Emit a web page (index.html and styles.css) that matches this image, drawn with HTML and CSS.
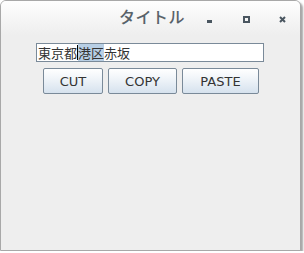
FILE: index.html
```html
<!DOCTYPE html>
<html lang="ja">
<head>
<meta charset="UTF-8" />
<title>タイトル</title>
<link rel="stylesheet" href="styles.css">
</head>
<body>
  <div class="window">
    <div class="titlebar">
      <span class="title">タイトル</span>
      <span class="ctl ctl-min"></span>
      <span class="ctl ctl-max"></span>
      <span class="ctl ctl-close">
        <svg width="7" height="7" viewBox="0 0 7 7"><path d="M1 1L6 6M6 1L1 6" stroke="#4a5660" stroke-width="2"/></svg>
      </span>
    </div>
    <div class="content">
      <div class="field">東京都<span class="caret"></span><span class="sel">港区</span>赤坂</div>
      <div class="buttons">
        <button class="btn btn-cut">CUT</button>
        <button class="btn btn-copy">COPY</button>
        <button class="btn btn-paste">PASTE</button>
      </div>
    </div>
  </div>
</body>
</html>
```

FILE: styles.css
```css
body {
  margin: 0;
  background: #ffffff;
  font-family: "DejaVu Sans", "Noto Sans CJK JP", sans-serif;
}

.window {
  box-sizing: border-box;
  width: 301px;
  height: 251px;
  border: 1px solid #a8a8a8;
  border-radius: 6px 6px 0 0;
  background: #eeeeee;
  box-shadow: 2px 2px 2px rgba(0,0,0,0.35);
  overflow: hidden;
}

.titlebar {
  height: 34px;
  display: flex;
  align-items: center;
  background: linear-gradient(to bottom, #fefefe, #f6f6f6 50%, #eeeeee);
}

.title {
  margin-left: 118px;
  margin-top: -4px;
  font-family: "Noto Sans CJK JP", sans-serif;
  font-size: 16px;
  font-weight: 500;
  color: #58626a;
  letter-spacing: 0.5px;
}

.ctl {
  display: inline-flex;
  width: 7px;
  height: 7px;
  margin-top: 3px;
}

.ctl-min {
  margin-left: 22px;
  height: 3px;
  width: 5px;
  margin-top: 7px;
  background: #4a5660;
}

.ctl-max {
  margin-left: 31px;
  box-sizing: border-box;
  border: 2px solid #4a5660;
}

.ctl-close {
  margin-left: 29px;
}

.content {
  padding: 8px 0 0 35px;
}

.field {
  box-sizing: border-box;
  width: 228px;
  height: 19px;
  border: 1px solid #7a8a99;
  background: #fff;
  font-family: "Noto Sans CJK JP", sans-serif;
  font-size: 13px;
  line-height: 17px;
  color: #333;
  padding-left: 1px;
  display: flex;
  align-items: center;
}

.caret {
  width: 1px;
  height: 15px;
  background: #000;
}

.sel {
  background: #b8cfe5;
}

.buttons {
  display: flex;
  gap: 5px;
  margin: 6px 0 0 7px;
}

.btn {
  box-sizing: border-box;
  height: 26px;
  border: 1px solid #7a8a99;
  border-radius: 2px;
  background: linear-gradient(to bottom, #ffffff, #eef3f8 45%, #d6e2ee);
  font-family: "DejaVu Sans", sans-serif;
  font-size: 13px;
  color: #333;
  padding: 0;
}

.btn-cut { width: 60px; }
.btn-copy { width: 69px; }
.btn-paste { width: 77px; }
```
